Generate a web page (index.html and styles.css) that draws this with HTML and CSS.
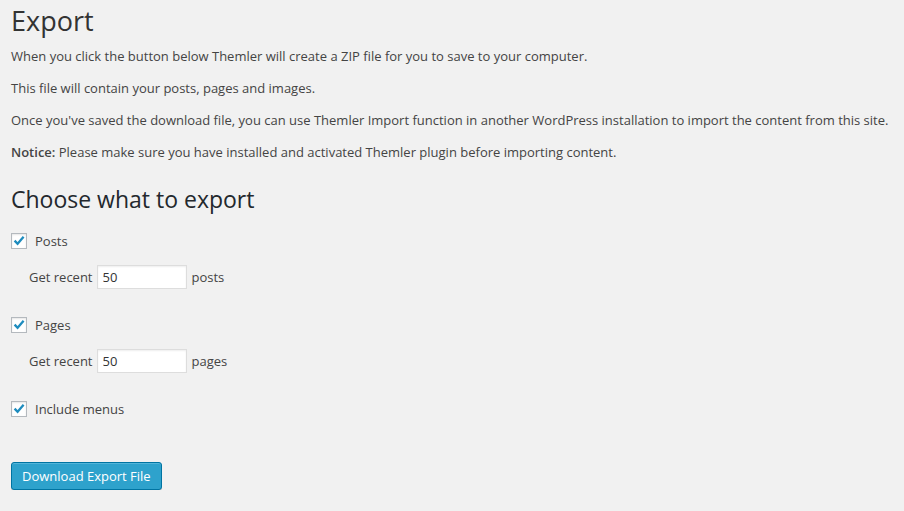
FILE: index.html
```html
<!DOCTYPE html>
<html lang="en">
<head>
<meta charset="utf-8">
<title>Export</title>
<link rel="stylesheet" href="styles.css">
</head>
<body>
<div class="wrap">
  <h1 class="title">Export</h1>
  <p class="text">When you click the button below Themler will create a ZIP file for you to save to your computer.</p>
  <p class="text">This file will contain your posts, pages and images.</p>
  <p class="text">Once you've saved the download file, you can use Themler Import function in another WordPress installation to import the content from this site.</p>
  <p class="text"><strong class="strong">Notice:</strong> Please make sure you have installed and activated Themler plugin before importing content.</p>

  <h2 class="subtitle">Choose what to export</h2>

  <label class="option">
    <span class="check"><svg viewBox="0 0 16 16" width="16" height="16"><path d="M3.6 7.6 L6.6 10.8 L12.6 3.8" fill="none" stroke="#1e8cbe" stroke-width="2.3" stroke-linecap="butt" stroke-linejoin="miter"/></svg></span>
    <span class="option-label">Posts</span>
  </label>
  <div class="recent">
    <span class="recent-label">Get recent</span>
    <input class="number" type="text" value="50">
    <span class="recent-unit">posts</span>
  </div>

  <label class="option option-next">
    <span class="check"><svg viewBox="0 0 16 16" width="16" height="16"><path d="M3.6 7.6 L6.6 10.8 L12.6 3.8" fill="none" stroke="#1e8cbe" stroke-width="2.3" stroke-linecap="butt" stroke-linejoin="miter"/></svg></span>
    <span class="option-label">Pages</span>
  </label>
  <div class="recent">
    <span class="recent-label">Get recent</span>
    <input class="number" type="text" value="50">
    <span class="recent-unit">pages</span>
  </div>

  <label class="option option-next">
    <span class="check"><svg viewBox="0 0 16 16" width="16" height="16"><path d="M3.6 7.6 L6.6 10.8 L12.6 3.8" fill="none" stroke="#1e8cbe" stroke-width="2.3" stroke-linecap="butt" stroke-linejoin="miter"/></svg></span>
    <span class="option-label">Include menus</span>
  </label>

  <div class="actions">
    <button class="button-primary" type="button">Download Export File</button>
  </div>
</div>
</body>
</html>
```

FILE: styles.css
```css
html, body {
  margin: 0;
  padding: 0;
  background: #f1f1f1;
}

body {
  font-family: "Open Sans", "Liberation Sans", sans-serif;
  font-size: 13px;
  color: #444;
}

.wrap {
  padding: 0 11px;
  display: flow-root;
}

.title {
  font-size: 27px;
  font-weight: 400;
  line-height: 35px;
  color: #333;
  margin: 3px 0 9px;
}

.text {
  margin: 0 0 13px;
  line-height: 19px;
}

.strong {
  font-weight: 600;
}

.subtitle {
  font-size: 23px;
  font-weight: 400;
  line-height: 30px;
  color: #23282d;
  margin: 22px 0 19px;
}

.option {
  display: flex;
  align-items: center;
  height: 16px;
  cursor: pointer;
}

.option-next {
  margin-top: 28px;
}

.check {
  box-sizing: border-box;
  width: 16px;
  height: 16px;
  border: 1px solid #b4b9be;
  background: #fff;
  box-shadow: inset 0 1px 2px rgba(0, 0, 0, 0.1);
  display: flex;
  align-items: center;
  justify-content: center;
  flex: none;
}

.check svg {
  display: block;
  margin: -1px;
}

.option-label {
  margin-left: 8px;
  line-height: 16px;
}

.recent {
  display: flex;
  align-items: center;
  margin-top: 16px;
  padding-left: 18px;
  height: 24px;
}

.number {
  box-sizing: border-box;
  width: 90px;
  height: 24px;
  margin: 0 5px 0 4px;
  padding: 0 5px;
  border: 1px solid #ddd;
  background: #fff;
  box-shadow: inset 0 1px 2px rgba(0, 0, 0, 0.07);
  font-family: "Open Sans", "Liberation Sans", sans-serif;
  font-size: 13px;
  color: #333;
  outline: none;
}

.actions {
  margin-top: 45px;
}

.button-primary {
  box-sizing: border-box;
  height: 28px;
  padding: 0 10px 1px;
  border: 1px solid #0074a2;
  border-radius: 3px;
  background: #2ea2cc;
  box-shadow: inset 0 1px 0 rgba(120, 200, 230, 0.5), 0 1px 0 rgba(0, 0, 0, 0.15);
  color: #fff;
  font-family: "Open Sans", "Liberation Sans", sans-serif;
  font-size: 13px;
  line-height: 26px;
  cursor: pointer;
}
```
